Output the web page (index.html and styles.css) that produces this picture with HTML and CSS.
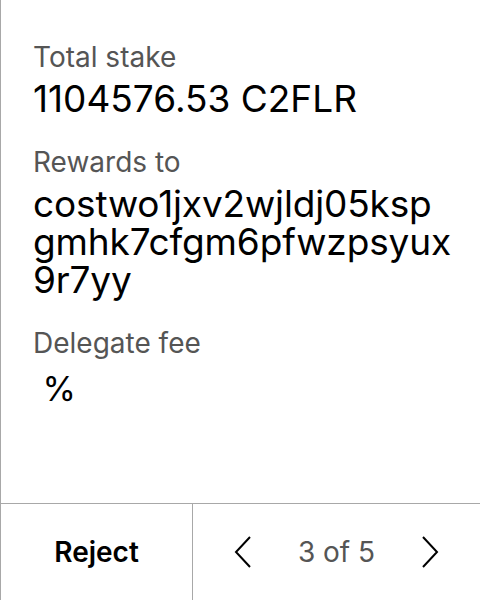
FILE: index.html
```html
<!DOCTYPE html>
<html>
<head>
<meta charset="utf-8">
<link rel="stylesheet" href="styles.css">
</head>
<body>
<div class="screen">
  <div class="content">
    <div class="field">
      <div class="label">Total stake</div>
      <div class="value">1104576.53 C2FLR</div>
    </div>
    <div class="field">
      <div class="label">Rewards to</div>
      <div class="value address">costwo1jxv2wjldj05ksp<wbr>gmhk7cfgm6pfwzpsyux<wbr>9r7yy</div>
    </div>
    <div class="field">
      <div class="label">Delegate fee</div>
      <div class="value fee">&nbsp;%</div>
    </div>
  </div>
  <div class="footer">
    <div class="reject">Reject</div>
    <div class="pager">
      <svg class="chev" width="18" height="32" viewBox="0 0 18 32"><path d="M16 1 L2 16 L16 31" fill="none" stroke="#000" stroke-width="2"/></svg>
      <span class="count">3 of 5</span>
      <svg class="chev" width="18" height="32" viewBox="0 0 18 32"><path d="M2 1 L16 16 L2 31" fill="none" stroke="#000" stroke-width="2"/></svg>
    </div>
  </div>
</div>
</body>
</html>
```
FILE: styles.css
```css
html, body {
  margin: 0;
  padding: 0;
  background: #fff;
}
.screen {
  width: 480px;
  height: 600px;
  box-sizing: border-box;
  border-left: 1px solid #a8a8a8;
  display: flex;
  flex-direction: column;
  font-family: Inter, "Noto Sans", sans-serif;
}
.content {
  flex: 1;
  padding: 40px 20px 0 32px;
  display: flex;
  flex-direction: column;
  gap: 27px;
}
.label {
  font-size: 28px;
  line-height: 34px;
  color: #555;
}
.value {
  font-size: 37px;
  line-height: 38px;
  color: #000;
  margin-top: 6px;
}
.address {
  letter-spacing: -0.15px;
}
.fee {
  margin-top: 10px;
  font-size: 34px;
}
.footer {
  height: 96px;
  border-top: 1px solid #a8a8a8;
  display: flex;
}
.reject {
  width: 191px;
  border-right: 1px solid #a8a8a8;
  display: flex;
  align-items: center;
  justify-content: center;
  font-size: 28px;
  font-weight: 600;
  color: #000;
}
.pager {
  flex: 1;
  display: flex;
  align-items: center;
  justify-content: center;
  gap: 46px;
}
.count {
  font-size: 28px;
  color: #555;
}
.chev {
  display: block;
}
```
